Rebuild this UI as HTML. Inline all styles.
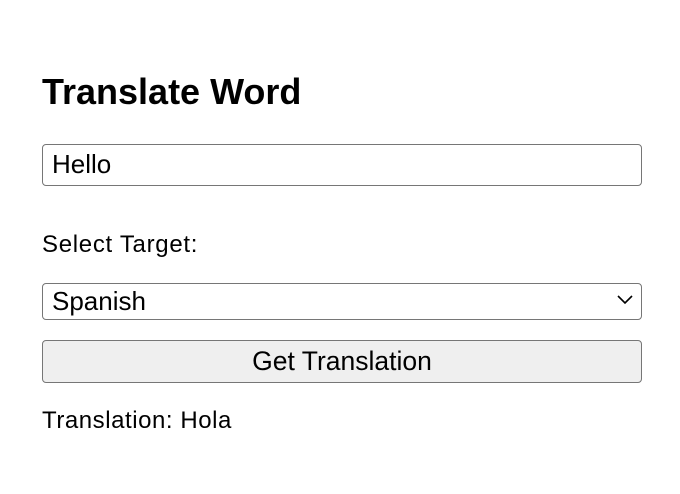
<!DOCTYPE html>
<html><head><style>
body{margin:0;width:680px;height:494px;background:#fff;font-family:"Liberation Sans",Arial,sans-serif;color:#000;position:relative}
.a{position:absolute;box-sizing:border-box}
</style></head><body>
<div class="a" style="left:42px;top:71px;font-size:36px;font-weight:bold;line-height:42px">Translate Word</div>
<div class="a" style="left:42px;top:144px;width:600px;height:42px;border:1.5px solid #767676;border-radius:4px;font-size:26px;line-height:38px;padding-left:9px">Hello</div>
<div class="a" style="left:42px;top:231px;font-size:24px;line-height:28px;letter-spacing:0.7px">Select Target:</div>
<div class="a" style="left:42px;top:283px;width:600px;height:37px;border:1.5px solid #767676;border-radius:4px;font-size:26px;line-height:34px;padding-left:9px">Spanish
<svg style="position:absolute;right:8px;top:11px" width="16" height="10" viewBox="0 0 16 10"><path d="M1 1 L8 8 L15 1" fill="none" stroke="#000" stroke-width="1.6"/></svg></div>
<div class="a" style="left:42px;top:340px;width:600px;height:43px;border:1.5px solid #767676;border-radius:4px;background:#efefef;font-size:26.5px;line-height:40px;text-align:center">Get Translation</div>
<div class="a" style="left:42px;top:407px;font-size:24px;line-height:28px;letter-spacing:0.55px">Translation: Hola</div>
</body></html>
